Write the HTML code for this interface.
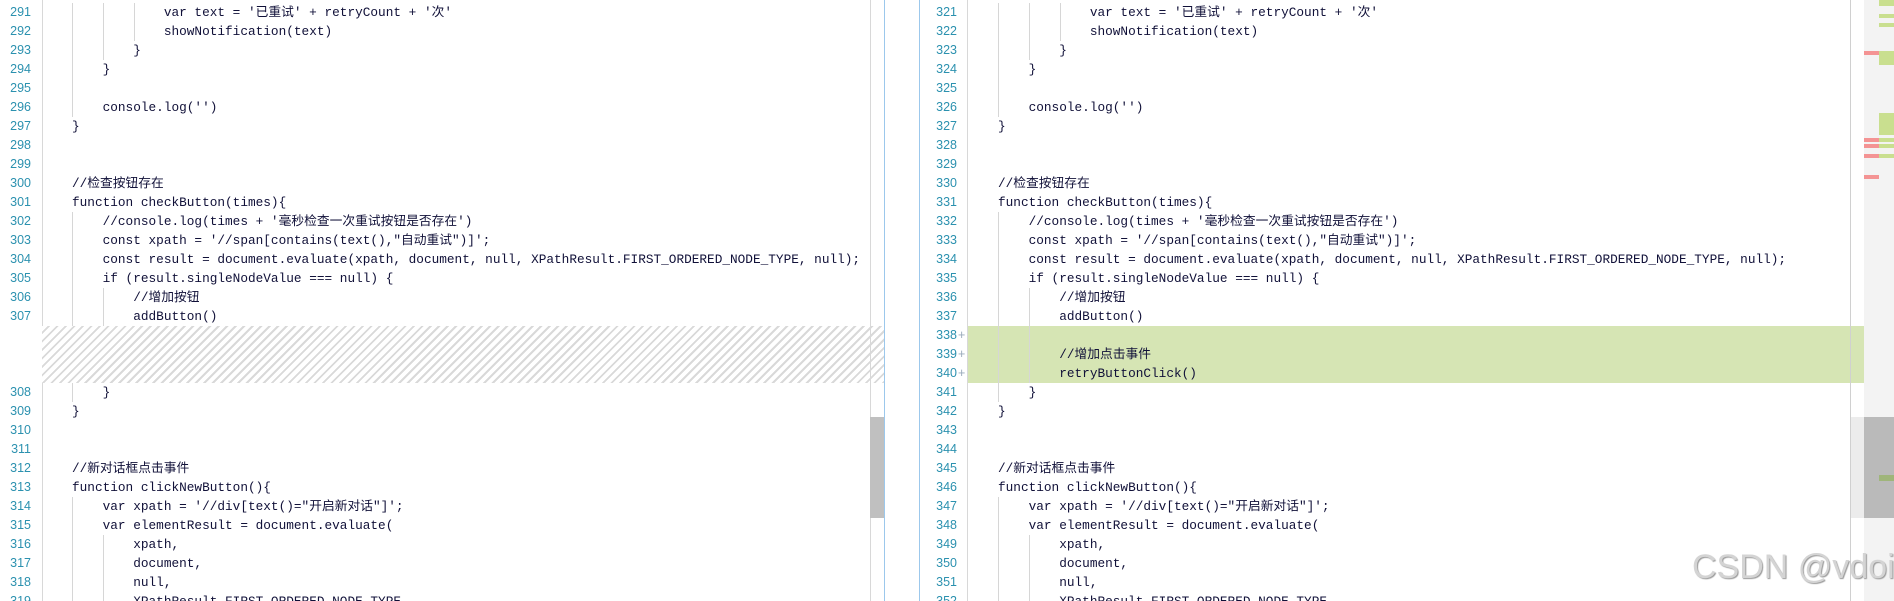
<!DOCTYPE html>
<html><head><meta charset="utf-8"><style>
html,body{margin:0;padding:0;width:1894px;height:601px;overflow:hidden;background:#fff;position:relative}
.ln{position:absolute;height:19px;line-height:19px;font-family:"Liberation Mono","Noto Sans CJK SC",monospace;font-size:12.75px;white-space:pre;color:#101038}
.num{position:absolute;height:19px;line-height:19px;font-family:"Liberation Sans","DejaVu Sans",sans-serif;font-size:12.5px;color:#2b91af;text-align:right;width:40px}
.g{position:absolute;width:1px;background:#d6d6d6}
.abs{position:absolute}
</style></head><body>
<div class="abs" style="left:42px;top:0;width:1px;height:601px;background:#d8d8d8"></div>
<div class="abs" style="left:967px;top:0;width:1px;height:601px;background:#d8d8d8"></div>
<div class="abs" style="left:42px;top:326px;width:842px;height:57px;background:repeating-linear-gradient(135deg,#fff 0 4px,#d9d9d9 4px 6px)"></div>
<div class="abs" style="left:968px;top:326px;width:896px;height:57px;background:#d6e5b4"></div>
<div class="abs" style="left:870px;top:0;width:1px;height:601px;background:#d8d8d8"></div>
<div class="abs" style="left:870px;top:417px;width:14px;height:101px;background:#c0c0c0"></div>
<div class="abs" style="left:884px;top:0;width:1px;height:601px;background:#9cc8ec"></div>
<div class="abs" style="left:919px;top:0;width:1px;height:601px;background:#9cc8ec"></div>
<div class="abs" style="left:1850px;top:0;width:1px;height:601px;background:#d0d0d0"></div>
<div class="abs" style="left:1851px;top:417px;width:13px;height:101px;background:#ececec"></div>
<div class="abs" style="left:1864px;top:0;width:30px;height:601px;background:#f3f3f3"></div>
<div class="abs" style="left:1864px;top:417px;width:30px;height:101px;background:#bababa"></div>
<div class="abs" style="left:1879px;top:0;width:15px;height:6px;background:#c9df8f"></div>
<div class="abs" style="left:1879px;top:14px;width:15px;height:4px;background:#c9df8f"></div>
<div class="abs" style="left:1879px;top:23px;width:15px;height:4px;background:#c9df8f"></div>
<div class="abs" style="left:1879px;top:51px;width:15px;height:14px;background:#c9df8f"></div>
<div class="abs" style="left:1879px;top:113px;width:15px;height:22px;background:#c9df8f"></div>
<div class="abs" style="left:1879px;top:138px;width:15px;height:4px;background:#c9df8f"></div>
<div class="abs" style="left:1879px;top:144px;width:15px;height:4px;background:#c9df8f"></div>
<div class="abs" style="left:1879px;top:154px;width:15px;height:4px;background:#c9df8f"></div>
<div class="abs" style="left:1864px;top:51px;width:15px;height:4px;background:#f49494"></div>
<div class="abs" style="left:1864px;top:138px;width:15px;height:4px;background:#f49494"></div>
<div class="abs" style="left:1864px;top:144px;width:15px;height:4px;background:#f49494"></div>
<div class="abs" style="left:1864px;top:154px;width:15px;height:4px;background:#f49494"></div>
<div class="abs" style="left:1864px;top:175px;width:15px;height:4px;background:#f49494"></div>
<div class="abs" style="left:1879px;top:475px;width:15px;height:6px;background:#9fb57a"></div>
<div id="c"></div>
<div class="abs" style="left:1692px;top:548px;font-family:'Liberation Sans',sans-serif;font-size:34px;color:#d4d4d4;text-shadow:1px 1px 1px #999;white-space:nowrap">CSDN @vdoi</div>
<script>
var L=[
[3,'            var text = \'已重试\' + retryCount + \'次\''],
[3,'            showNotification(text)'],
[2,'        }'],[1,'    }'],[1,''],[1,'    console.log(\'\')'],[0,'}'],[0,''],[0,''],
[0,'//检查按钮存在'],[0,'function checkButton(times){'],
[1,'    //console.log(times + \'毫秒检查一次重试按钮是否存在\')'],
[1,'    const xpath = \'//span[contains(text(),"自动重试")]\';'],
[1,'    const result = document.evaluate(xpath, document, null, XPathResult.FIRST_ORDERED_NODE_TYPE, null);'],
[1,'    if (result.singleNodeValue === null) {'],
[2,'        //增加按钮'],[2,'        addButton()'],
null,null,null,
[1,'    }'],[0,'}'],[0,''],[0,''],
[0,'//新对话框点击事件'],[0,'function clickNewButton(){'],
[1,'    var xpath = \'//div[text()="开启新对话"]\';'],
[1,'    var elementResult = document.evaluate('],
[2,'        xpath,'],[2,'        document,'],[2,'        null,'],[2,'        XPathResult.FIRST_ORDERED_NODE_TYPE,']];
var R=L.slice();R[17]=[2,''];R[18]=[2,'        //增加点击事件'];R[19]=[2,'        retryButtonClick()'];
var h='';
function esc(s){return s.replace(/&/g,'&amp;').replace(/</g,'&lt;')}
function pane(arr,x0,nx,start,plus){
 var n=start;
 for(var i=0;i<arr.length;i++){
  var t=3+i*19,r=arr[i];
  if(!r)continue;
  if(!plus && i>=17&&i<=19)continue;
  for(var k=0;k<r[0];k++){h+='<div class="g" style="left:'+(x0+k*31)+'px;top:'+t+'px;height:19px"></div>';}
  var num=plus?(start+i):n;
  h+='<div class="num" style="left:'+(nx-40)+'px;top:'+t+'px">'+num+'</div>';
  if(plus&&i>=17&&i<=19)h+='<div class="num" style="left:'+(nx+1)+'px;top:'+t+'px;width:10px;text-align:left;color:#9ab">+</div>';
  h+='<div class="ln" style="left:'+x0+'px;top:'+t+'px">'+esc(r[1])+'</div>';
  n++;
 }
}
pane(L,72,31,291,false);
pane(R,998,957,321,true);
document.getElementById('c').innerHTML=h;
</script>
</body></html>
